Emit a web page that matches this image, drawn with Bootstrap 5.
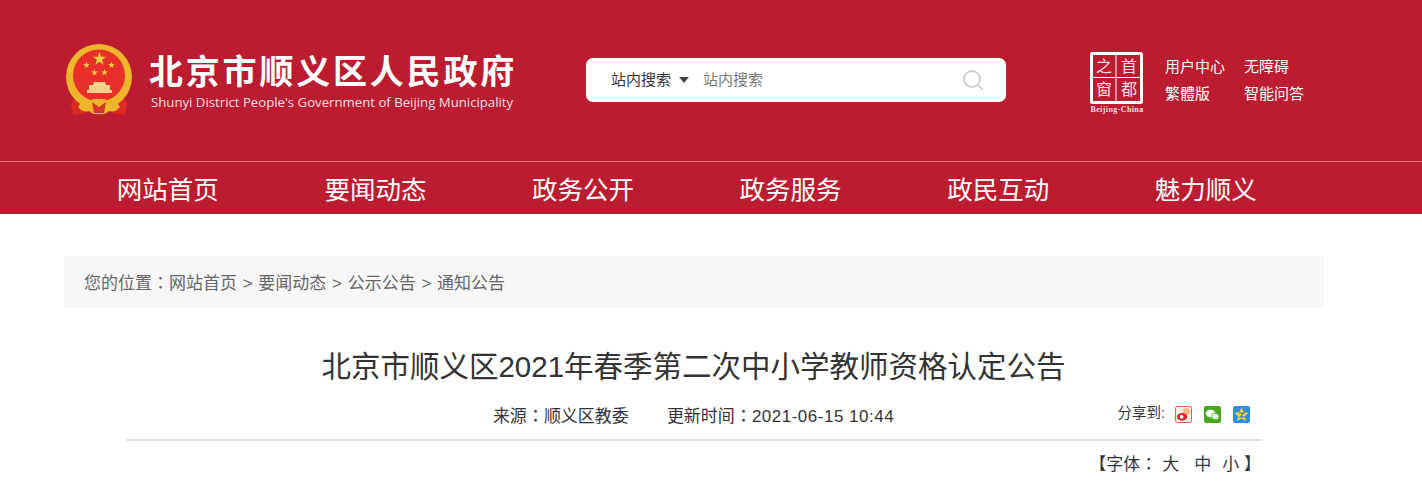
<!DOCTYPE html>
<html lang="zh-CN">
<head>
    <title>北京市顺义区人民政府</title>
    <meta charset="UTF-8">
    <link rel="stylesheet" href="https://cdn.jsdelivr.net/npm/bootstrap@5.3.2/dist/css/bootstrap.min.css">
    <style>
        body { font-family: "Liberation Sans", "Noto Sans CJK SC", sans-serif; color: #333; }
        .top-band { background: #bc1c2f; height: 161px; padding: 44px 0 0 64px; }
        .site-name { font-size: 34px; line-height: 44px; font-weight: 700; letter-spacing: 2.8px; color: #fff; margin: 6px 0 0 -1px; white-space: nowrap; }
        .site-en { font-family: "Open Sans", sans-serif; font-size: 13.2px; line-height: 16px; color: #f6dfe2; white-space: nowrap; margin-left: 1px; }
        .logo-box { width: 522px; }
        .search-box { width: 420px; height: 44px; margin-top: 14px; border-radius: 7px; padding: 0 22px 0 25px; font-size: 15px; }
        .search-scope { color: #333; width: 92px; }
        .scope-arrow { width: 0; height: 0; border-style: solid; border-width: 6px 5.5px 0; border-color: #444 transparent transparent; margin-left: 8px; }
        .search-hint { color: #777; }
        .capital-logo { margin: 8px 0 0 83px; }
        .side-links { margin: 9px 0 0 19px; font-size: 15px; line-height: 27px; color: #fff; }
        .side-links span { width: 79px; }
        .nav-band { background: #bc1c2f; border-top: 1px solid #e4727f; height: 53px; padding-left: 64px; }
        .nav-cell { width: 207.6px; font-size: 25.5px; line-height: 56px; color: #fff; text-align: center; }
        .crumb-bar { margin: 42px 98px 0 64px; height: 52px; background: #f7f7f7; color: #666; font-size: 17px; line-height: 52px; padding-left: 20px; word-spacing: 1px; }
        .wide-colon { font-family: "Noto Sans CJK TC", sans-serif; }
        .article-head { margin: 0 161px 0 126px; }
        .article-title { font-size: 29.5px; line-height: 40px; font-weight: 400; color: #333; text-align: center; margin: 39px 0 0; }
        .meta-row { display: grid; grid-template-columns: 1fr auto 1fr; height: 37px; font-size: 17px; line-height: 26px; padding-top: 15px; border-bottom: 2px solid #ddd; box-sizing: content-box; }
        .meta-row .from-text { margin-right: 38px; }
        .date-text { letter-spacing: .5px; }
        .share-box { font-size: 14.5px; line-height: 23px; padding-right: 11px; gap: 12px; }
        .share-label { margin-right: -2px; }
        .share-box svg { margin-top: 4px; }
        .size-row { font-size: 17px; line-height: 24px; padding-top: 10px; text-align: right; color: #333; }
        .size-big { margin-left: 5px; }
        .size-mid { margin-left: 15px; }
        .size-small { margin-left: 11px; }
    </style>
</head>
<body class="overflow-hidden">
    <div class="top-band d-flex align-items-start">
        <div class="logo-box d-flex">
            <svg width="70" height="72" viewBox="0 0 70 72" class="flex-shrink-0">
                <defs>
                    <polygon id="emblem-star" points="0,-1 .224,-.309 .951,-.309 .363,.118 .588,.809 0,.382 -.588,.809 -.363,.118 -.951,-.309 -.224,-.309"/>
                </defs>
                <path d="M11 52l-4 8 2 11 13-2 3-10z" fill="#dc2a24"/>
                <path d="M59 52l4 8-2 11-13-2-3-10z" fill="#dc2a24"/>
                <circle cx="35" cy="33" r="33" fill="#efb52c"/>
                <circle cx="35" cy="31.500" r="26" fill="#e8302a"/>
                <g fill="#f8cf3c">
                    <use href="#emblem-star" transform="translate(35.500 15) scale(7)"/>
                    <use href="#emblem-star" transform="translate(22.500 21) scale(3.600)"/>
                    <use href="#emblem-star" transform="translate(47.500 21) scale(3.600)"/>
                    <use href="#emblem-star" transform="translate(30.500 28.500) scale(3.600)"/>
                    <use href="#emblem-star" transform="translate(40.500 28.500) scale(3.600)"/>
                </g>
                <path d="M30 38h11l1 3h4v5h2v3H23v-3h2v-5h4z" fill="#f6d08a"/>
                <path d="M14 63q4-7 10-5 5-4 11-3 6-1 11 3 6-2 10 5-5 6-11 4-4 4-10 3-6 1-10-3-6 2-11-4z" fill="#efb52c"/>
                <path d="M28 58l7 5 7-5-2 11H30z" fill="#d8352a"/>
            </svg>
            <div class="ms-3">
                <div class="site-name">北京市顺义区人民政府</div>
                <div class="site-en">Shunyi District People's Government of Beijing Municipality</div>
            </div>
        </div>
        <div class="search-box bg-white d-flex align-items-center">
            <div class="search-scope d-flex align-items-center"><span>站内搜索</span><i class="scope-arrow"></i></div>
            <div class="search-hint flex-grow-1">站内搜索</div>
            <svg width="22" height="22" viewBox="0 0 22 22" fill="none" stroke="#d0d0d0" stroke-width="2" stroke-linecap="round">
                <circle cx="10" cy="10" r="8"/>
                <path d="M16 16l4 4"/>
            </svg>
        </div>
        <svg class="capital-logo flex-shrink-0" width="57" height="62" viewBox="0 0 57 62">
            <rect x="2.500" y="1.500" width="50" height="49" fill="none" stroke="#fff" stroke-width="3" rx="1"/>
            <path d="M27 2v47M3 25.500h48" stroke="#fff" stroke-width="1"/>
            <g font-family="'Noto Sans CJK SC', sans-serif" font-size="16" fill="#f9dfe3" text-anchor="middle">
                <text x="15" y="20">之</text>
                <text x="40" y="20">首</text>
                <text x="15" y="43">窗</text>
                <text x="40" y="43">都</text>
            </g>
            <text x="28" y="60" font-family="'Liberation Serif', serif" font-size="8" font-weight="700" fill="#f9dfe3" text-anchor="middle" letter-spacing=".4">Beijing-China</text>
        </svg>
        <div class="side-links">
            <div class="d-flex"><span>用户中心</span><span>无障碍</span></div>
            <div class="d-flex"><span>繁體版</span><span>智能问答</span></div>
        </div>
    </div>

    <div class="nav-band d-flex">
        <div class="nav-cell">网站首页</div>
        <div class="nav-cell">要闻动态</div>
        <div class="nav-cell">政务公开</div>
        <div class="nav-cell">政务服务</div>
        <div class="nav-cell">政民互动</div>
        <div class="nav-cell">魅力顺义</div>
    </div>

    <div class="crumb-bar">您的位置<span class="wide-colon" lang="zh-TW">：</span>网站首页 &gt; 要闻动态 &gt; 公示公告 &gt; 通知公告</div>

    <div class="article-head">
        <h1 class="article-title">北京市顺义区2021年春季第二次中小学教师资格认定公告</h1>
        <div class="meta-row">
            <div></div>
            <div class="d-flex"><span class="from-text">来源<span class="wide-colon" lang="zh-TW">：</span>顺义区教委</span><span>更新时间<span class="wide-colon" lang="zh-TW">：</span><span class="date-text">2021-06-15 10:44</span></span></div>
            <div class="share-box d-flex justify-content-end">
                <span class="share-label">分享到:</span>
                <svg width="17" height="17" viewBox="0 0 18 18">
                    <rect x=".5" y=".5" width="17" height="17" rx="2" fill="#fbeee4" stroke="#d8583a"/>
                    <circle cx="12" cy="6" r="3.500" fill="#f5b77c"/>
                    <ellipse cx="7.500" cy="11.500" rx="5.500" ry="4" fill="#d9262c"/>
                    <circle cx="7" cy="11.500" r="2" fill="#fff"/>
                </svg>
                <svg width="17" height="17" viewBox="0 0 18 18">
                    <rect width="18" height="18" rx="2" fill="#46a81c"/>
                    <ellipse cx="7" cy="8" rx="5" ry="4.200" fill="#fff"/>
                    <ellipse cx="12" cy="11" rx="4" ry="3.400" fill="#e8f6df" stroke="#46a81c" stroke-width=".8"/>
                </svg>
                <svg width="17" height="17" viewBox="0 0 18 18">
                    <rect width="18" height="18" rx="2" fill="#2a8fe6"/>
                    <polygon points="9,1.500 11.300,6.600 16.500,7.200 12.600,10.800 13.700,16 9,13.300 4.300,16 5.400,10.800 1.500,7.200 6.700,6.600" fill="#fbcf33"/>
                    <path d="M6.500 7.500h5l-4 4h5" fill="none" stroke="#3b7fd0" stroke-width="1.200"/>
                </svg>
            </div>
        </div>
        <div class="size-row">【字体<span class="wide-colon" lang="zh-TW">：</span><span class="size-big">大</span><span class="size-mid">中</span><span class="size-small">小</span> 】</div>
    </div>

    <script src="https://cdn.jsdelivr.net/npm/bootstrap@5.3.2/dist/js/bootstrap.bundle.min.js"></script>
</body>
</html>
